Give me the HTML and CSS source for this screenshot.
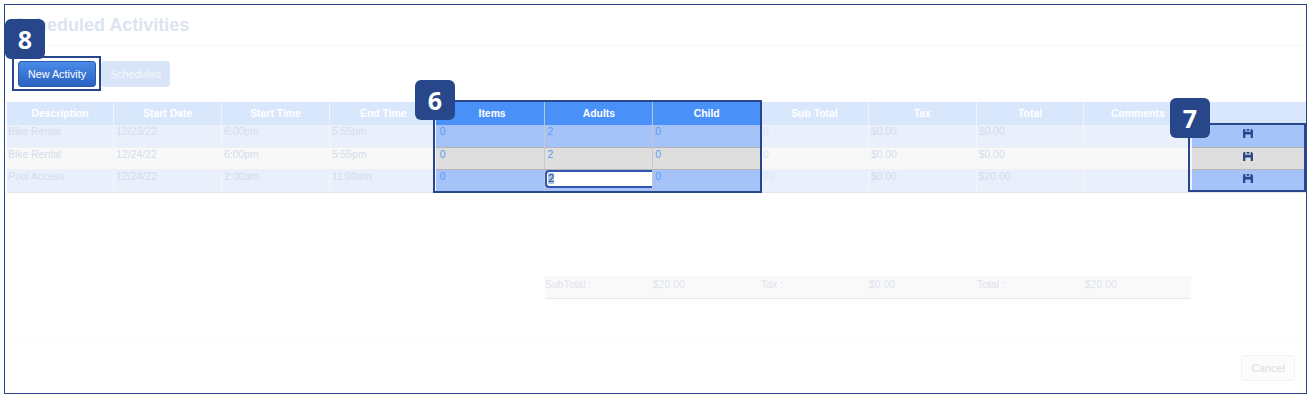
FILE: index.html
```html
<!DOCTYPE html>
<html lang="en">

<head>
    <meta charset="UTF-8">
    <title>Scheduled Activities</title>
    <link rel="stylesheet" href="styles.css">
</head>

<body>
    <svg class="defs" width="0" height="0">
        <symbol id="save" viewBox="0 0 11 10">
            <path d="M0 1L1 0H2.500V3H8.500V0H9.500L11 1.500V10H8.500V6H2.500V10H0Z M4 0H7V2H4Z"></path>
        </symbol>
    </svg>

    <div class="frame">
        <h1 class="title">Scheduled Activities</h1>

        <div class="toolbar">
            <button class="btn btn-primary">New Activity</button>
            <button class="btn btn-light">Scheduled</button>
        </div>

        <table class="grid">
            <thead>
                <tr>
                    <th class="first">Description</th>
                    <th>Start Date</th>
                    <th>Start Time</th>
                    <th class="end">End Time</th>
                    <th class="hl items">Items</th>
                    <th class="hl">Adults</th>
                    <th class="hl">Child</th>
                    <th>Sub Total</th>
                    <th>Tax</th>
                    <th>Total</th>
                    <th>Comments</th>
                    <th class="last"></th>
                </tr>
            </thead>
            <tbody>
                <tr>
                    <td class="first">Bike Rental</td>
                    <td>12/23/22</td>
                    <td>6:00pm</td>
                    <td>5:55pm</td>
                    <td class="hl items">0</td>
                    <td class="hl">2</td>
                    <td class="hl">0</td>
                    <td class="sub">0</td>
                    <td>$0.00</td>
                    <td>$0.00</td>
                    <td></td>
                    <td class="hl action"><svg class="save"><use href="#save"></use></svg></td>
                </tr>
                <tr>
                    <td class="first">Bike Rental</td>
                    <td>12/24/22</td>
                    <td>6:00pm</td>
                    <td>5:55pm</td>
                    <td class="hl items">0</td>
                    <td class="hl">2</td>
                    <td class="hl">0</td>
                    <td class="sub">0</td>
                    <td>$0.00</td>
                    <td>$0.00</td>
                    <td></td>
                    <td class="hl action"><svg class="save"><use href="#save"></use></svg></td>
                </tr>
                <tr>
                    <td class="first">Pool Access</td>
                    <td>12/24/22</td>
                    <td>2:00am</td>
                    <td>11:00am</td>
                    <td class="hl items">0</td>
                    <td class="hl editing"><div class="field"><span class="selected">2</span></div></td>
                    <td class="hl">0</td>
                    <td class="sub">20</td>
                    <td>$0.00</td>
                    <td>$20.00</td>
                    <td></td>
                    <td class="hl action"><svg class="save"><use href="#save"></use></svg></td>
                </tr>
            </tbody>
        </table>

        <div class="summary">
            <span>SubTotal :</span>
            <span>$20.00</span>
            <span>Tax :</span>
            <span>$0.00</span>
            <span>Total :</span>
            <span>$20.00</span>
        </div>

        <div class="footer">
            <button class="btn btn-cancel">Cancel</button>
        </div>

        <!-- callouts on top of the page -->
        <div class="box box-new"></div>
        <div class="box box-cols"></div>
        <div class="box box-save"></div>
        <div class="badge badge-8">8</div>
        <div class="badge badge-6">6</div>
        <div class="badge badge-7">7</div>
    </div>
</body>

</html>
```

FILE: styles.css
```css
* {
    box-sizing: border-box;
    font-family: "Liberation Sans", Arial, sans-serif;
}

body {
    margin: 0;
    padding: 4px;
    background-color: white;
}

.defs {
    display: block;
    height: 0;
}

.frame {
    position: relative;
    width: 1303px;
    height: 390px;
    border: 1px solid #27478a;
}

.title {
    height: 41px;
    margin: 0;
    padding: 9px 0 0 9px;
    border-bottom: 1px solid #f7f7f7;
    font-size: 18px;
    line-height: 22px;
    font-weight: bold;
    color: #dce4f0;
}

.toolbar {
    display: flex;
    gap: 5px;
    margin: 15px 0 15px 13px;
}

.btn {
    height: 26px;
    padding: 0;
    border-radius: 3px;
    font-size: 10.800px;
}

.btn-primary {
    width: 78px;
    border: 1px solid #2a5db0;
    background: linear-gradient(#4a8ae8, #2a62c0);
    color: white;
}

.btn-light {
    width: 69px;
    border: 1px solid #dbe6f6;
    background-color: #d8e4f7;
    color: #f4f7fc;
}

.grid {
    table-layout: fixed;
    width: 1299px;
    margin-left: 2px;
    border-collapse: collapse;
    font-size: 10.400px;
}

.grid th {
    width: 107.800px;
    height: 23px;
    padding: 0 4px;
    border-right: 1px solid #eef4fe;
    background-color: #d9e7fd;
    color: white;
    font-weight: bold;
    text-align: center;
}

.grid th.first {
    width: 106.800px;
}

.grid th.end {
    width: 105.800px;
    padding-left: 6px;
}

.grid th.items {
    width: 109.800px;
    padding-left: 8px;
    border-left: 0;
}

.grid th.last {
    width: 114.200px;
    border-right: 0;
}

.grid td {
    height: 22px;
    padding: 1px 0 0 2px;
    border-right: 1px solid #f3f6fc;
    color: #d3dcec;
    vertical-align: top;
    line-height: 12px;
    background-color: #e9f0fc;
}

.grid td.first {
    padding-left: 1px;
}

.grid td.items {
    padding-left: 4px;
}

.grid td.sub {
    color: #d8e6fb;
}

.grid tbody tr:nth-child(even) td {
    background-color: #f8f8f8;
    border-top: 1px solid #f0f0f0;
    border-bottom: 1px solid #f0f0f0;
}

.grid tbody tr:last-child td {
    height: 23px;
    border-bottom: 1px solid #e6e6e6;
}

.grid th.hl {
    background-color: #4a90f9;
    border-right: 1px solid #b9c4d6;
}

.grid td.hl {
    background-color: #a6c3f9;
    border-right: 1px solid #c4c8d0;
    color: #5a9af5;
}

.grid tbody tr:nth-child(even) td.hl {
    background-color: #dedede;
    border-top: 1px solid #b5b5b5;
    border-bottom: 1px solid #b5b5b5;
}

.grid td.action {
    padding: 4px 3px 0 0;
    text-align: center;
    border-right: 0;
}

.grid td.editing {
    padding: 0;
}

.field {
    height: 18px;
    padding: 0 0 0 1px;
    border: 2px solid #2f55b4;
    border-right: 0;
    border-radius: 4px 0 0 4px;
    background-color: white;
    line-height: 13px;
    color: #2a4a8a;
}

.selected {
    background-color: #a9c4ea;
}

.save {
    display: inline-block;
    width: 10px;
    height: 9px;
    fill: #27478a;
}

.summary {
    display: grid;
    grid-template-columns: repeat(6, 108px);
    width: 646px;
    height: 23px;
    margin: 83px 0 0 540px;
    border-bottom: 1px solid #e8e8e8;
    background-color: #f9f9f9;
    font-size: 10.400px;
    line-height: 18px;
    color: #e0e4ee;
}

.footer {
    display: flex;
    justify-content: flex-end;
    height: 44px;
    margin-top: 41px;
    padding: 14px 11px 0 0;
    border-top: 1px solid #fbfbfb;
}

.btn-cancel {
    width: 54px;
    border: 1px solid #f2f2f2;
    background-color: #fcfcfc;
    color: #dcdcdc;
}

.box {
    position: absolute;
    border: 2px solid #27478a;
}

.box-new {
    left: 7px;
    top: 51px;
    width: 89px;
    height: 35px;
}

.box-cols {
    left: 428px;
    top: 95px;
    width: 329px;
    height: 93px;
}

.box-save {
    left: 1183px;
    top: 118px;
    width: 118px;
    height: 69px;
}

.badge {
    position: absolute;
    width: 40px;
    height: 40px;
    border-radius: 6px;
    background-color: #27478a;
    color: white;
    font-family: "Open Sans", sans-serif;
    font-size: 25px;
    font-weight: 700;
    line-height: 40px;
    text-align: center;
}

.badge-8 {
    left: 0;
    top: 14px;
}

.badge-6 {
    left: 410px;
    top: 75px;
}

.badge-7 {
    left: 1165px;
    top: 93px;
}
```
